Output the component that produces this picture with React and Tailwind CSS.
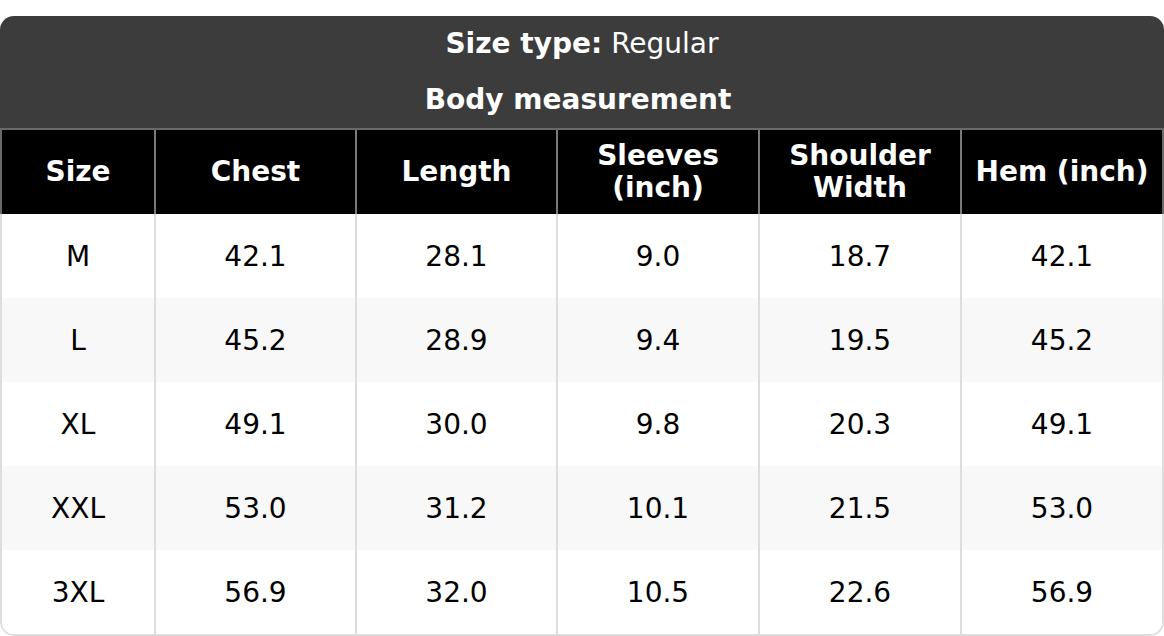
import React from 'react'

// Size chart data (inches)
const ROWS = [
  ['M', '42.1', '28.1', '9.0', '18.7', '42.1'],
  ['L', '45.2', '28.9', '9.4', '19.5', '45.2'],
  ['XL', '49.1', '30.0', '9.8', '20.3', '49.1'],
  ['XXL', '53.0', '31.2', '10.1', '21.5', '53.0'],
  ['3XL', '56.9', '32.0', '10.5', '22.6', '56.9'],
]

const HEAD_LABELS = [
  ['Size'],
  ['Chest'],
  ['Length'],
  ['Sleeves', '(inch)'],
  ['Shoulder', 'Width'],
  ['Hem (inch)'],
]

const GRID = 'grid grid-cols-[152px_201px_201px_202px_202px_1fr]'

export default function App() {
  return (
    <div className="bg-white pt-4 font-['DejaVu_Sans',sans-serif]">
      <div className="rounded-[14px] overflow-hidden">
        {/* Title block */}
        <div className="bg-[#3c3c3c] text-white text-[28px] border-b-2 border-[#6a6a6a]">
          <div className="h-[56px] flex items-center justify-center">
            <span className="font-bold">Size type:</span>
            <span className="ml-[9px]">Regular</span>
          </div>
          <div className="h-[56px] flex items-center justify-center font-bold pr-2">
            Body measurement
          </div>
        </div>

        {/* Column headers */}
        <div className={`${GRID} bg-black text-white font-bold text-[28px] leading-[32px] border-x-2 border-[#6a6a6a]`}>
          {HEAD_LABELS.map((lines, i) => (
            <div
              key={lines[0]}
              className={`h-[84px] flex flex-col items-center justify-center text-center ${i > 0 ? 'border-l-2 border-[#7a7a7a]' : ''}`}
            >
              {lines.map((l) => (
                <span key={l}>{l}</span>
              ))}
            </div>
          ))}
        </div>

        {/* Body rows */}
        <div className="border-x-2 border-b-2 border-[#dddddd] rounded-b-[14px] overflow-hidden">
          {ROWS.map((row, r) => (
            <div key={row[0]} className={`${GRID} ${r % 2 === 1 ? 'bg-[#f8f8f8]' : 'bg-white'} text-[28px] text-black`}>
              {row.map((cell, i) => (
                <div
                  key={i}
                  className={`h-[84px] flex items-center justify-center pt-px ${i > 0 ? 'border-l-2 border-[#dddddd]' : ''}`}
                >
                  {cell}
                </div>
              ))}
            </div>
          ))}
        </div>
      </div>
    </div>
  )
}
